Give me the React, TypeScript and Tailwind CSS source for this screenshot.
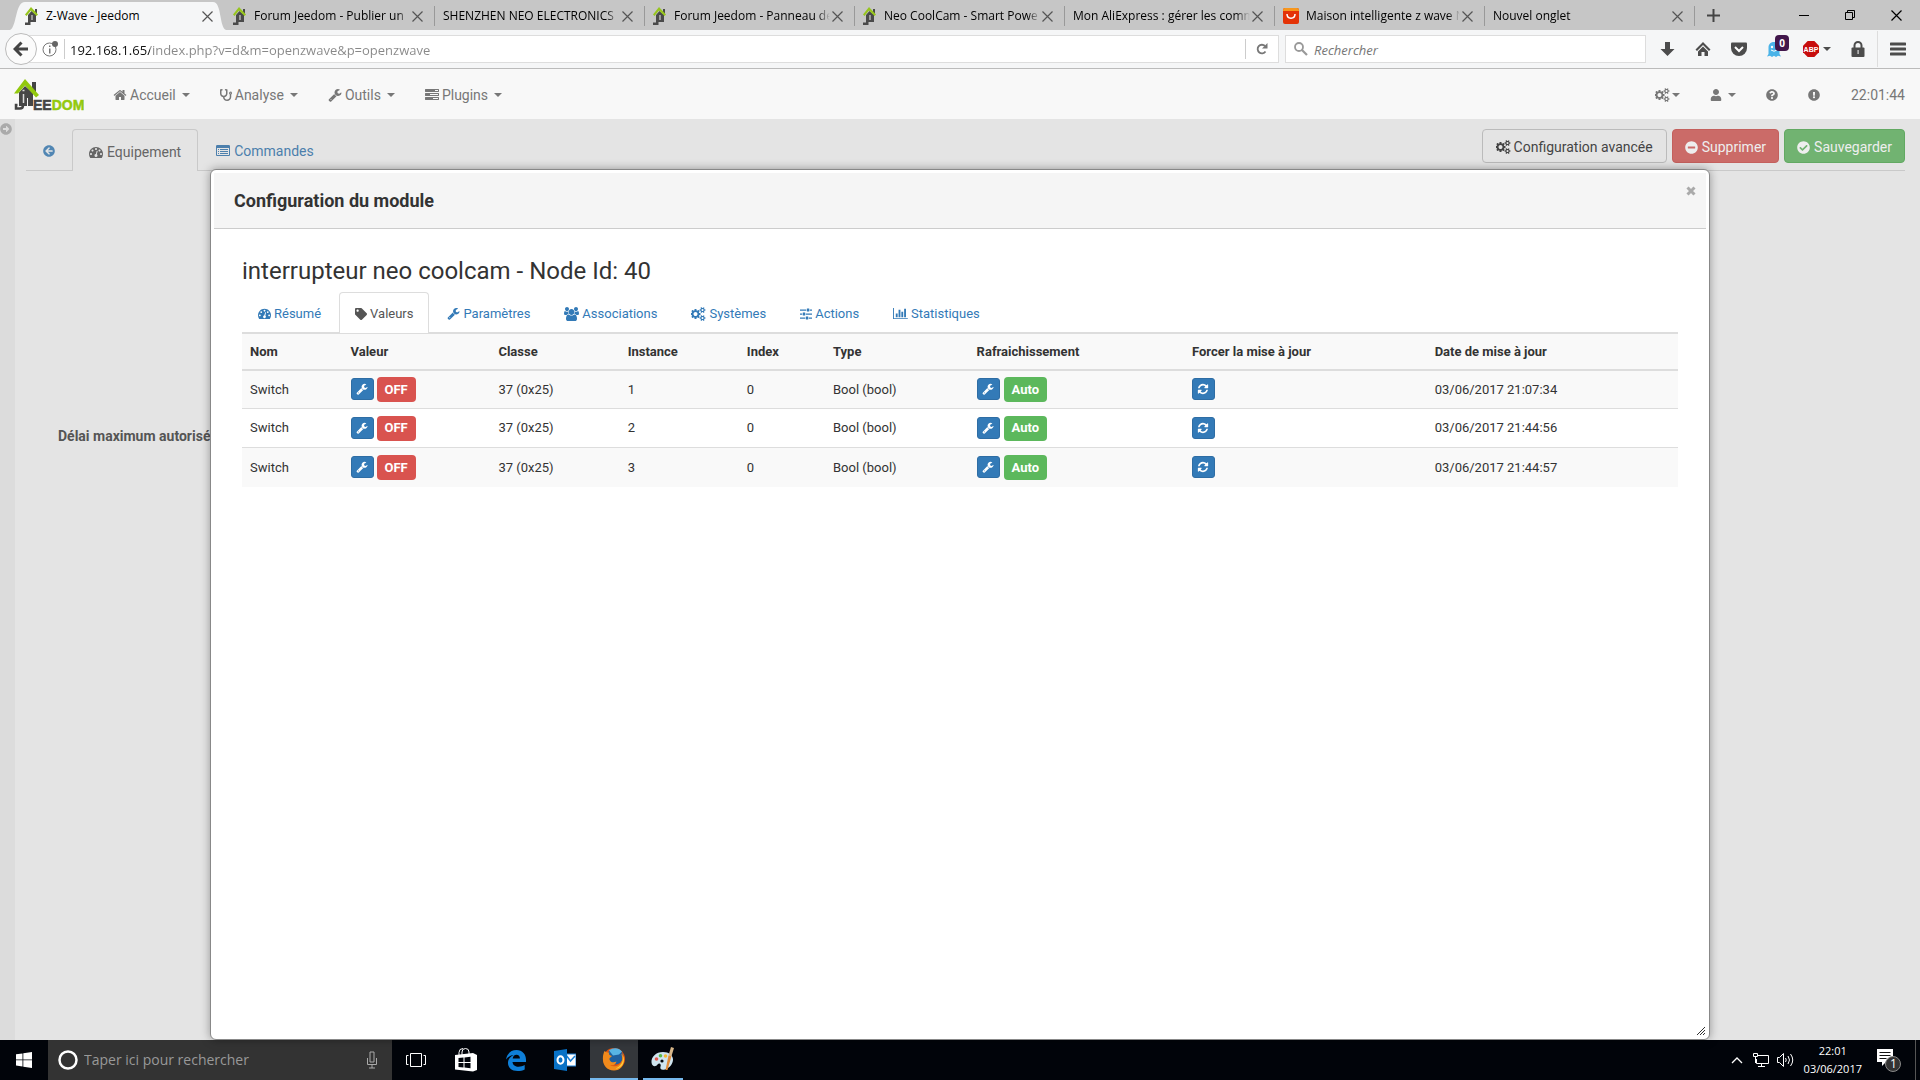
import React from 'react';
import {
    FaArrowAltCircleRight,
    FaArrowCircleLeft,
    FaCheckCircle,
    FaExclamationCircle,
    FaMinusCircle,
    FaQuestionCircle,
    FaStethoscope,
    FaTag,
    FaUser,
} from 'react-icons/fa';

const GLYPHS = {
    wrench: {
        width: 1792,
        d: 'M448 1472q0-26-19-45t-45-19-45 19-19 45 19 45 45 19 45-19 19-45zm644-420l-682 682q-37 37-90 37-52 0-91-37l-106-108q-38-36-38-90 0-53 38-91l681-681q39 98 114.5 173.5t173.5 114.5zm634-435q0 39-23 106-47 134-164.5 217.5t-258.5 83.5q-185 0-316.5-131.5t-131.5-316.5 131.5-316.5 316.5-131.5q58 0 121.5 16.5t107.5 46.5q16 11 16 28t-16 28l-293 169v224l193 107q5-3 79-48.5t135.5-81 70.5-35.5q15 0 23.5 10t8.5 25z',
    },
    refresh: {
        width: 1792,
        d: 'M1639 1056q0 5-1 7-64 268-268 434.5t-478 166.5q-146 0-282.5-55t-243.5-157l-129 129q-19 19-45 19t-45-19-19-45v-448q0-26 19-45t45-19h448q26 0 45 19t19 45-19 45l-137 137q71 66 161 102t187 36q134 0 250-65t186-179q11-17 53-117 8-23 30-23h192q13 0 22.5 9.5t9.5 22.5zm25-800v448q0 26-19 45t-45 19h-448q-26 0-45-19t-19-45 19-45l138-138q-148-137-349-137-134 0-250 65t-186 179q-11 17-53 117-8 23-30 23h-199q-13 0-22.5-9.5t-9.5-22.5v-7q65-268 270-434.5t480-166.5q146 0 284 55.5t245 156.5l130-129q19-19 45-19t45 19 19 45z',
    },
    home: {
        width: 1792,
        d: 'M1472 992v480q0 26-19 45t-45 19h-384v-384h-256v384h-384q-26 0-45-19t-19-45v-480q0-1 .5-3t.5-3l575-474 575 474q1 2 1 6zm223-69l-62 74q-8 9-21 11h-3q-13 0-21-7l-692-577-692 577q-12 8-24 7-13-2-21-11l-62-74q-8-10-7-23.5t11-21.5l719-599q32-26 76-26t76 26l244 204v-195q0-14 9-23t23-9h192q14 0 23 9t9 23v408l219 182q10 8 11 21.5t-7 23.5z',
    },
    cogs: {
        width: 1920,
        d: 'M832 896q0-106-75-181t-181-75-181 75-75 181 75 181 181 75 181-75 75-181zm768 512q0-52-38-90t-90-38-90 38-38 90q0 53 37.5 90.5t90.5 37.5 90.5-37.5 37.5-90.5zm0-1024q0-52-38-90t-90-38-90 38-38 90q0 53 37.5 90.5t90.5 37.5 90.5-37.5 37.5-90.5zm-384 421v185q0 10-7 19.5t-16 10.5l-155 24q-11 35-32 76 34 48 90 115 7 11 7 20 0 12-7 19-23 30-82.5 89.5t-78.5 59.5q-11 0-21-7l-115-90q-37 19-77 31-11 108-23 155-7 24-30 24h-186q-11 0-20-7.5t-10-17.5l-23-153q-34-10-75-31l-118 89q-7 7-20 7-11 0-21-8-144-133-144-160 0-9 7-19 10-14 41-53t47-61q-23-44-35-82l-152-24q-10-1-17-9.5t-7-19.5v-185q0-10 7-19.5t16-10.5l155-24q11-35 32-76-34-48-90-115-7-11-7-20 0-12 7-20 22-30 82-89t79-59q11 0 21 7l115 90q34-18 77-32 11-108 23-154 7-24 30-24h186q11 0 20 7.5t10 17.5l23 153q34 10 75 31l118-89q8-7 20-7 11 0 21 8 144 133 144 160 0 8-7 19-12 16-42 54t-45 60q23 48 34 82l152 23q10 2 17 10.5t7 19.5zm640 533v140q0 16-149 31-12 27-30 52 51 113 51 138 0 4-4 7-122 71-124 71-8 0-46-47t-52-68q-20 2-30 2t-30-2q-14 21-52 68t-46 47q-2 0-124-71-4-3-4-7 0-25 51-138-18-25-30-52-149-15-149-31v-140q0-16 149-31 13-29 30-52-51-113-51-138 0-4 4-7 4-2 35-20t59-34 30-16q8 0 46 46.5t52 67.5q20-2 30-2t30 2q51-71 92-112l6-2q4 0 124 70 4 3 4 7 0 25-51 138 17 23 30 52 149 15 149 31zm0-1024v140q0 16-149 31-12 27-30 52 51 113 51 138 0 4-4 7-122 71-124 71-8 0-46-47t-52-68q-20 2-30 2t-30-2q-14 21-52 68t-46 47q-2 0-124-71-4-3-4-7 0-25 51-138-18-25-30-52-149-15-149-31v-140q0-16 149-31 13-29 30-52-51-113-51-138 0-4 4-7 4-2 35-20t59-34 30-16q8 0 46 46.5t52 67.5q20-2 30-2t30 2q51-71 92-112l6-2q4 0 124 70 4 3 4 7 0 25-51 138 17 23 30 52 149 15 149 31z',
    },
    dashboard: {
        width: 1792,
        d: 'M384 1152q0-53-37.5-90.5t-90.5-37.5-90.5 37.5-37.5 90.5 37.5 90.5 90.5 37.5 90.5-37.5 37.5-90.5zm192-448q0-53-37.5-90.5t-90.5-37.5-90.5 37.5-37.5 90.5 37.5 90.5 90.5 37.5 90.5-37.5 37.5-90.5zm428 481l101-382q6-26-7.5-48.5t-38.5-29.5-48 6.5-30 39.5l-101 382q-60 5-107 43.5t-63 98.5q-20 77 20 146t117 89 146-20 89-117q16-60-6-117t-72-91zm660-33q0-53-37.5-90.5t-90.5-37.5-90.5 37.5-37.5 90.5 37.5 90.5 90.5 37.5 90.5-37.5 37.5-90.5zm-640-640q0-53-37.5-90.5t-90.5-37.5-90.5 37.5-37.5 90.5 37.5 90.5 90.5 37.5 90.5-37.5 37.5-90.5zm448 192q0-53-37.5-90.5t-90.5-37.5-90.5 37.5-37.5 90.5 37.5 90.5 90.5 37.5 90.5-37.5 37.5-90.5zm320 448q0 261-141 483-19 29-54 29h-1402q-35 0-54-29-141-221-141-483 0-182 71-348t191-286 286-191 348-71 348 71 286 191 191 286 71 348z',
    },
    users: {
        width: 1920,
        d: 'M593 896q-162 5-265 128h-134q-82 0-138-40.5t-56-118.5q0-353 124-353 6 0 43.5 21t97.5 42.5 119 21.5q67 0 133-23-5 37-5 66 0 139 81 256zm1071 637q0 120-73 189.5t-194 69.5h-874q-121 0-194-69.5t-73-189.5q0-53 3.5-103.5t14-109 26.5-108.5 43-97.5 62-81 85.5-53.5 111.5-20q10 0 43 21.5t73 48 107 48 135 21.5 135-21.5 107-48 73-48 43-21.5q61 0 111.5 20t85.5 53.5 62 81 43 97.5 26.5 108.5 14 109 3.5 103.5zm-1024-1277q0 106-75 181t-181 75-181-75-75-181 75-181 181-75 181 75 75 181zm704 384q0 159-112.5 271.5t-271.5 112.5-271.5-112.5-112.5-271.5 112.5-271.5 271.5-112.5 271.5 112.5 112.5 271.5zm576 225q0 78-56 118.5t-138 40.5h-134q-103-123-265-128 81-117 81-256 0-29-5-66 66 23 133 23 59 0 119-21.5t97.5-42.5 43.5-21q124 0 124 353zm-128-609q0 106-75 181t-181 75-181-75-75-181 75-181 181-75 181 75 75 181z',
    },
    chart: {
        width: 2048,
        d: 'M640 896v512h-256v-512h256zm384-512v1024h-256v-1024h256zm1024 1152v128h-2048v-1536h128v1408h1920zm-640-896v768h-256v-768h256zm384-384v1152h-256v-1152h256z',
    },
    sliders: {
        width: 1536,
        d: 'M0 320h800v150h-800zM1248 320h288v150h-288zM880 200h300v390h-300zM0 832h288v150h-288zM736 832h800v150h-800zM360 712h300v390h-300zM0 1344h672v150h-672zM1120 1344h416v150h-416zM750 1224h300v390h-300z',
    },
    tasks: {
        width: 1792,
        d: 'M1024 1408h640v-128h-640v128zm-384-512h1024v-128h-1024v128zm640-512h384v-128h-384v128zm512 832v256q0 26-19 45t-45 19h-1664q-26 0-45-19t-19-45v-256q0-26 19-45t45-19h1664q26 0 45 19t19 45zm0-512v256q0 26-19 45t-45 19h-1664q-26 0-45-19t-19-45v-256q0-26 19-45t45-19h1664q26 0 45 19t19 45zm0-512v256q0 26-19 45t-45 19h-1664q-26 0-45-19t-19-45v-256q0-26 19-45t45-19h1664q26 0 45 19t19 45z',
    },
    list: {
        width: 1792,
        d: 'M384 1184v64q0 13-9.5 22.5t-22.5 9.5h-64q-13 0-22.5-9.5t-9.5-22.5v-64q0-13 9.5-22.5t22.5-9.5h64q13 0 22.5 9.5t9.5 22.5zm0-256v64q0 13-9.5 22.5t-22.5 9.5h-64q-13 0-22.5-9.5t-9.5-22.5v-64q0-13 9.5-22.5t22.5-9.5h64q13 0 22.5 9.5t9.5 22.5zm0-256v64q0 13-9.5 22.5t-22.5 9.5h-64q-13 0-22.5-9.5t-9.5-22.5v-64q0-13 9.5-22.5t22.5-9.5h64q13 0 22.5 9.5t9.5 22.5zm1152 512v64q0 13-9.5 22.5t-22.5 9.5h-960q-13 0-22.5-9.5t-9.5-22.5v-64q0-13 9.5-22.5t22.5-9.5h960q13 0 22.5 9.5t9.5 22.5zm0-256v64q0 13-9.5 22.5t-22.5 9.5h-960q-13 0-22.5-9.5t-9.5-22.5v-64q0-13 9.5-22.5t22.5-9.5h960q13 0 22.5 9.5t9.5 22.5zm0-256v64q0 13-9.5 22.5t-22.5 9.5h-960q-13 0-22.5-9.5t-9.5-22.5v-64q0-13 9.5-22.5t22.5-9.5h960q13 0 22.5 9.5t9.5 22.5zm128 704v-832q0-13-9.5-22.5t-22.5-9.5h-1472q-13 0-22.5 9.5t-9.5 22.5v832q0 13 9.5 22.5t22.5 9.5h1472q13 0 22.5-9.5t9.5-22.5zm128-1088v1088q0 66-47 113t-113 47h-1472q-66 0-113-47t-47-113v-1088q0-66 47-113t113-47h1472q66 0 113 47t47 113z',
    },
};

const Glyph: React.FC<{ name: keyof typeof GLYPHS; className?: string }> = ({ name, className }) => (
    <svg viewBox={`0 0 ${GLYPHS[name].width} 1792`} fill="currentColor" aria-hidden="true" className={className ?? 'h-3.5 shrink-0'}>
        <path fillRule="evenodd" d={GLYPHS[name].d} />
    </svg>
);

const Caret: React.FC<{ className?: string }> = ({ className }) => (
    <svg viewBox="0 0 8 4" fill="currentColor" aria-hidden="true" className={`h-1 w-2 shrink-0 ${className ?? ''}`}>
        <path d="M0 0h8L4 4z" />
    </svg>
);

const JeedomMark = () => (
    <svg viewBox="0 0 14 18" className="h-[18px] w-3.5 shrink-0" aria-hidden="true">
        <path d="M10 2h2v6h-2z" fill="#4a4a4a" />
        <path d="M3 8l3.500-4L11 8v7H5.500v3H0v-2.500h3z" fill="#4a4a4a" />
        <path d="M6 8h2v5H6z" fill="#9a9a9a" />
        <path d="M6 0l7 7.500-1.500 1.500L6 3.500 1.500 9 0 7.500z" fill="#97c51e" />
    </svg>
);

const AliMark = () => (
    <svg viewBox="0 0 16 16" className="size-4 shrink-0" aria-hidden="true">
        <rect width="16" height="16" rx="2" fill="#e43307" />
        <path d="M2 0h12a2 2 0 0 1 2 2v1H0V2a2 2 0 0 1 2-2z" fill="#f7971d" />
        <path d="M4 6c0 5.500 8 5.500 8 0" fill="none" stroke="#fff" strokeWidth="1.500" />
    </svg>
);

const Cross: React.FC<{ className?: string }> = ({ className }) => (
    <svg viewBox="0 0 11 11" className={className ?? 'size-[11px]'} aria-hidden="true">
        <path d="M.5.5l10 10M10.500.5l-10 10" stroke="currentColor" strokeWidth="1.200" />
    </svg>
);

interface BrowserTabProps {
    title: string;
    icon?: React.ReactNode;
}

const BROWSER_TABS: BrowserTabProps[] = [
    { title: 'Forum Jeedom - Publier un', icon: <JeedomMark /> },
    { title: 'SHENZHEN NEO ELECTRONICS' },
    { title: 'Forum Jeedom - Panneau de', icon: <JeedomMark /> },
    { title: 'Neo CoolCam - Smart Powe', icon: <JeedomMark /> },
    { title: 'Mon AliExpress : gérer les comm' },
    { title: 'Maison intelligente z wave N', icon: <AliMark /> },
    { title: 'Nouvel onglet' },
];

const BrowserTab: React.FC<BrowserTabProps> = ({ title, icon }) => (
    <div className="relative flex h-full w-[210px] min-w-0 items-center pl-2 pr-3 pt-0.5">
        <button className="flex h-full min-w-0 flex-1 items-center gap-[7px] overflow-hidden">
            {icon}
            <span className="min-w-0 flex-1 overflow-hidden whitespace-nowrap text-left [mask-image:linear-gradient(to_right,black_92%,transparent)]">{title}</span>
        </button>
        <button aria-label="Fermer l'onglet" className="ml-0.5 text-[#555]"><Cross /></button>
        <span className="absolute right-0 top-1.5 h-5 w-px bg-[#999]" />
    </div>
);

const BrowserChrome = () => (
    <header className="shrink-0 font-['Open_Sans',sans-serif] text-black">
        <div className="flex h-[30px] items-center bg-[#c6c6c6] text-xs">
            <div className="relative z-0 flex h-full w-[225px] shrink-0 items-center pl-[25px] pr-3 pt-0.5">
                <svg viewBox="0 0 216 28" preserveAspectRatio="none" className="absolute bottom-0 left-2.5 -z-10 h-7 w-[216px]" aria-hidden="true">
                    <path d="M0 28c7-3 5-28 15-28h188c9 0 6 25 13 28z" fill="#f5f6f7" />
                </svg>
                <button className="flex h-full flex-1 items-center gap-[7px]">
                    <JeedomMark />
                    Z-Wave - Jeedom
                </button>
                <button aria-label="Fermer l'onglet" className="text-[#555]"><Cross /></button>
            </div>
            {BROWSER_TABS.map((tab) => <BrowserTab key={tab.title} {...tab} />)}
            <button aria-label="Nouvel onglet" className="ml-3 text-[#444]">
                <svg viewBox="0 0 13 13" className="size-[13px]"><path d="M6.500 0v13M0 6.500h13" stroke="currentColor" strokeWidth="2" /></svg>
            </button>
            <div className="ml-auto flex items-center gap-9 pr-[18px]">
                <button aria-label="Réduire"><svg viewBox="0 0 10 10" className="size-2.5"><path d="M0 5.500h10" stroke="#000" /></svg></button>
                <button aria-label="Restaurer"><svg viewBox="0 0 10 10" className="size-2.5"><path d="M.5 2.500h7v7h-7zM2.500 2.500v-2h7v7h-2" fill="none" stroke="#000" /></svg></button>
                <button aria-label="Fermer"><Cross /></button>
            </div>
        </div>
        <div className="flex h-[39px] items-center border-b border-[#bbb] bg-[#f5f6f7] pl-[5px] pr-3.5 text-[#4c4c4c]">
            <button aria-label="Page précédente" className="z-10 flex size-8 shrink-0 items-center justify-center rounded-full border border-[#bbb] bg-[#fbfbfb]">
                <svg viewBox="0 0 16 16" className="size-4"><path d="M8.500 1.500L2 8l6.500 6.500M2.500 8H15" fill="none" stroke="#444" strokeWidth="3" /></svg>
            </button>
            <div className="-ml-4 flex h-7 flex-1 items-center border border-[#ddd] bg-white pl-5">
                <svg viewBox="0 0 16 16" className="size-4 shrink-0" aria-hidden="true">
                    <circle cx="7.500" cy="8.500" r="6.500" fill="none" stroke="#777" />
                    <path d="M7 7.500h1.500v5H7zM7 4.500h1.500V6H7z" fill="#777" />
                    <circle cx="13" cy="3" r="3" fill="#666" />
                </svg>
                <span className="ml-1.5 mr-[5px] h-5 w-px bg-[#ccc]" />
                <input
                    aria-label="Adresse"
                    defaultValue="192.168.1.65/index.php?v=d&m=openzwave&p=openzwave"
                    className="h-full min-w-0 flex-1 bg-[linear-gradient(to_right,#111_80px,#888_80px)] bg-clip-text pt-0.5 text-[13px] text-transparent outline-none"
                />
                <span className="h-5 w-px bg-[#ccc]" />
                <button aria-label="Actualiser" className="flex w-8 justify-center">
                    <svg viewBox="0 0 12 12" className="size-3"><path d="M9.500 8.500A4.300 4.300 0 1 1 9 3" fill="none" stroke="#777" strokeWidth="1.800" /><path d="M11.500 0v5.500H6z" fill="#777" /></svg>
                </button>
            </div>
            <label className="ml-1.5 flex h-7 w-[361px] shrink items-center gap-1.5 border border-[#ddd] bg-white px-2">
                <svg viewBox="0 0 14 14" className="size-3.5 shrink-0"><circle cx="5" cy="5" r="4" fill="none" stroke="#999" strokeWidth="1.800" /><path d="M8 8l5 5" stroke="#999" strokeWidth="2.200" /></svg>
                <input aria-label="Rechercher" placeholder="Rechercher" className="h-full min-w-0 flex-1 pt-0.5 text-[13px] italic outline-none placeholder:text-[#777]" />
            </label>
            <div className="ml-3.5 flex items-center">
                <button aria-label="Téléchargements" className="mr-5"><svg viewBox="0 0 15 16" className="h-4 w-[15px]"><path d="M5 1h5v7h4.500L7.500 15 .5 8H5z" fill="currentColor" /></svg></button>
                <button aria-label="Accueil" className="mr-5"><svg viewBox="0 0 16 16" className="size-4"><path d="M8 1l7.500 7.500-1.500 1.400-6-6-6 6L.5 8.500zM8 5.500l5 5V15H9.500v-4h-3v4H3v-4.500z" fill="currentColor" /></svg></button>
                <button aria-label="Pocket" className="mr-5"><svg viewBox="0 0 16 16" className="size-4"><path d="M1 1.500h14q1 0 1 1V7a8 8 0 0 1-16 0V2.500q0-1 1-1z" fill="currentColor" /><path d="M4 6l4 4 4-4" fill="none" stroke="#fff" strokeWidth="2" /></svg></button>
                <button aria-label="Ghostery" className="relative mr-5 w-4">
                    <svg viewBox="0 0 14 16" className="h-4 w-3.5"><path d="M1.500 6.500C1.500-.8 12.500-.8 12.500 6.500V13l1.500 2.500-3-.8L9 16l-2-1.300L5 16l-2-1.300-3 .8L1.500 13z" fill="#4ab3e8" /><circle cx="5" cy="6" r="1.200" fill="#fff" /><circle cx="9" cy="6" r="1.200" fill="#fff" /><path d="M4 9q3 2.500 6 0" fill="none" stroke="#fff" /></svg>
                    <span className="absolute -top-1.5 left-2 flex h-4 w-3.5 items-center justify-center rounded-sm bg-[#41164b] text-[10px] font-bold text-white">0</span>
                </button>
                <button aria-label="Adblock Plus" className="mr-5 flex items-center gap-1">
                    <svg viewBox="0 0 16 16" className="size-4"><path d="M4.700 0h6.600L16 4.700v6.600L11.300 16H4.700L0 11.300V4.700z" fill="#c70d0d" /><text x="8" y="10.800" textAnchor="middle" fontSize="7" fontWeight="700" fill="#fff" fontFamily="Liberation Sans">ABP</text></svg>
                    <Caret />
                </button>
                <button aria-label="Verrou" className="mr-3"><svg viewBox="0 0 14 16" className="h-4 w-3.5"><path d="M3.500 8V4.500a3.500 3.500 0 0 1 7 0V8" fill="none" stroke="currentColor" strokeWidth="2" /><rect x=".5" y="6.500" width="13" height="9.500" rx="1" fill="currentColor" /><path d="M6.500 9h1.200v4H6.500z" fill="#ddd" /></svg></button>
                <button aria-label="Menu" className="flex h-9 items-center border-l border-[#ddd] pl-3"><svg viewBox="0 0 16 14" className="h-3.5 w-4"><path d="M1 2h14M1 7h14M1 12h14" stroke="currentColor" strokeWidth="3" strokeLinecap="round" /></svg></button>
            </div>
        </div>
    </header>
);

const NavItem: React.FC<{ icon: React.ReactNode; label: string }> = ({ icon, label }) => (
    <a href="#" className="flex h-full items-center gap-[3px] px-[15px]">
        {icon}
        {label}
        <Caret className="ml-[3px]" />
    </a>
);

const JeedomNav = () => (
    <nav className="flex h-[50px] shrink-0 items-center bg-[#f8f8f8] pl-3.5 pt-0.5 text-sm text-[#777]">
        <a href="#" aria-label="Jeedom" className="mr-3.5">
            <svg viewBox="0 0 70 32" className="h-8 w-[70px]">
                <path d="M18 3h4v11h-4z" fill="#444" />
                <path d="M5 13.500L11 7l8 7v13h-5v-8h-1v8H5z" fill="#474747" />
                <path d="M9 15v11.500q0 3-3 3H2V26h1.500" fill="none" stroke="#444" strokeWidth="2.500" />
                <path d="M9.500 15v9M8.500 11.500h2" stroke="#ddd" strokeWidth="1.500" />
                <path d="M11 0l14 16-3 2.500L11 6.500 4 14.500H0z" fill="#93c90e" />
                <text x="19" y="30.500" fontSize="14" fontWeight="900" fontFamily="Liberation Sans" fill="#444" stroke="#444" strokeWidth=".5">EE<tspan fill="#93c90e" stroke="#93c90e">DOM</tspan></text>
            </svg>
        </a>
        <NavItem icon={<Glyph name="home" />} label="Accueil" />
        <NavItem icon={<FaStethoscope className="size-3" />} label="Analyse" />
        <NavItem icon={<Glyph name="wrench" />} label="Outils" />
        <NavItem icon={<Glyph name="tasks" />} label="Plugins" />
        <div className="ml-auto flex h-full items-center pr-[15px]">
            <a href="#" aria-label="Configuration" className="flex items-center px-[15px]"><Glyph name="cogs" /><Caret className="ml-0.5" /></a>
            <a href="#" aria-label="Utilisateur" className="flex items-center gap-1.5 px-[15px]"><FaUser className="size-3" /><Caret /></a>
            <a href="#" aria-label="Aide" className="px-[15px]"><FaQuestionCircle className="size-3" /></a>
            <a href="#" aria-label="Informations" className="px-[15px]"><FaExclamationCircle className="size-3" /></a>
            <span className="pl-4">22:01:44</span>
        </div>
    </nav>
);

const EquipmentToolbar = () => (
    <div className="flex items-start justify-between border-b border-[#c9c9c9]">
        <div className="-mb-px flex h-[42px] text-sm">
            <a href="#" aria-label="Retour" className="flex items-center px-[17px] pt-0.5 text-[#5186b3]"><FaArrowCircleLeft className="size-3" /></a>
            <a href="#" className="flex items-center gap-1 rounded-t border border-b-0 border-[#c9c9c9] bg-[#e4e4e4] px-4 pt-0.5 text-[#666]"><Glyph name="dashboard" />Equipement</a>
            <a href="#" className="flex items-center gap-1 px-[18px] pt-0.5 text-[#4c7fac]"><Glyph name="list" />Commandes</a>
        </div>
        <div className="flex gap-[5px] text-sm">
            <button className="flex h-[34px] items-center gap-[3px] rounded border border-[#bbb] px-[13px] pt-0.5 text-[#444]"><Glyph name="cogs" />Configuration avancée</button>
            <button className="flex h-[34px] items-center gap-1 rounded border border-[#c4605d] bg-[#cb6b68] px-3 pt-0.5 text-[#eee]"><FaMinusCircle className="size-[13px]" />Supprimer</button>
            <button className="flex h-[34px] items-center gap-1 rounded border border-[#62a962] bg-[#71b371] px-3 pt-0.5 text-[#eee]"><FaCheckCircle className="size-[13px]" />Sauvegarder</button>
        </div>
    </div>
);

const MODULE_TABS: { label: string; icon: React.ReactNode; active?: boolean }[] = [
    { label: 'Résumé', icon: <Glyph name="dashboard" className="h-[13px] shrink-0" /> },
    { label: 'Valeurs', icon: <FaTag className="size-3" />, active: true },
    { label: 'Paramètres', icon: <Glyph name="wrench" className="h-[13px] shrink-0" /> },
    { label: 'Associations', icon: <Glyph name="users" /> },
    { label: 'Systèmes', icon: <Glyph name="cogs" /> },
    { label: 'Actions', icon: <Glyph name="sliders" /> },
    { label: 'Statistiques', icon: <Glyph name="chart" className="h-[13px] shrink-0" /> },
];

const VALUES = [
    { name: 'Switch', commandClass: '37 (0x25)', instance: 1, index: 0, type: 'Bool (bool)', updated: '03/06/2017 21:07:34' },
    { name: 'Switch', commandClass: '37 (0x25)', instance: 2, index: 0, type: 'Bool (bool)', updated: '03/06/2017 21:44:56' },
    { name: 'Switch', commandClass: '37 (0x25)', instance: 3, index: 0, type: 'Bool (bool)', updated: '03/06/2017 21:44:57' },
];

const IconButton: React.FC<{ icon: keyof typeof GLYPHS; label: string }> = ({ icon, label }) => (
    <button aria-label={label} className="flex h-[22px] w-[23px] items-center justify-center rounded-[3px] border border-[#2e6da4] bg-[#337ab7] text-white">
        <Glyph name={icon} className="size-3" />
    </button>
);

const ValuesTable = () => (
    <table className="w-full table-fixed border-collapse text-left text-[13px]">
        <thead className="bg-[#f9f9f9]">
            <tr className="h-9 border-b-2 border-t border-[#ddd]">
                <th className="w-[7%] px-2">Nom</th>
                <th className="w-[10.3%] px-2">Valeur</th>
                <th className="w-[9%] px-2">Classe</th>
                <th className="w-[8.3%] px-2">Instance</th>
                <th className="w-[6%] px-2">Index</th>
                <th className="w-[10%] px-2">Type</th>
                <th className="w-[15%] px-2">Rafraichissement</th>
                <th className="w-[16.9%] px-2">Forcer la mise à jour</th>
                <th className="px-2">Date de mise à jour</th>
            </tr>
        </thead>
        <tbody>
            {VALUES.map((value) => (
                <tr key={value.instance} className="h-[39px] border-t border-[#ddd] odd:bg-[#f9f9f9]">
                    <td className="px-2">{value.name}</td>
                    <td className="px-2">
                        <div className="flex items-center gap-[3px]">
                            <IconButton icon="wrench" label="Modifier la valeur" />
                            <span className="flex h-[25px] items-center rounded bg-[#d9534f] px-2 font-bold text-white">OFF</span>
                        </div>
                    </td>
                    <td className="px-2">{value.commandClass}</td>
                    <td className="px-2">{value.instance}</td>
                    <td className="px-2">{value.index}</td>
                    <td className="px-2">{value.type}</td>
                    <td className="px-2">
                        <div className="flex items-center gap-1">
                            <IconButton icon="wrench" label="Modifier le rafraichissement" />
                            <span className="flex h-[25px] items-center rounded bg-[#5cb85c] px-2 font-bold text-white">Auto</span>
                        </div>
                    </td>
                    <td className="px-2"><IconButton icon="refresh" label="Forcer la mise à jour" /></td>
                    <td className="px-2">{value.updated}</td>
                </tr>
            ))}
        </tbody>
    </table>
);

const ModuleDialog = () => (
    <section role="dialog" aria-labelledby="module-title" className="absolute inset-x-[210px] bottom-0 top-[50px] rounded-md border border-[#888] bg-white p-[3px] text-[#333] shadow-[0_0_10px_rgba(0,0,0,0.35)]">
        <div className="flex h-14 items-center justify-between border-b border-[#ccc] bg-[#f5f5f5] pl-5 pr-2.5">
            <h1 id="module-title" className="text-lg font-bold">Configuration du module</h1>
            <button aria-label="Fermer" className="mb-5 text-[#aaa]">
                <svg viewBox="0 0 10 10" className="size-2.5"><path d="M1.500 1.500l7 7M8.500 1.500l-7 7" stroke="currentColor" strokeWidth="3" /></svg>
            </button>
        </div>
        <div className="px-7 pt-[26px]">
            <h2 className="mb-[5px] text-2xl">interrupteur neo coolcam - Node Id: 40</h2>
            <div className="flex h-[41px] gap-0.5 border-b border-[#ddd] text-[13px]">
                {MODULE_TABS.map((tab) => (
                    <a
                        key={tab.label}
                        href="#"
                        className={tab.active
                            ? '-mb-px flex items-center gap-[3px] rounded-t border border-b-0 border-[#ddd] bg-white px-[15px] pt-0.5 text-[#555]'
                            : 'flex items-center gap-[3px] px-4 pt-[3px] text-[#337ab7]'}
                    >
                        {tab.icon}
                        {tab.label}
                    </a>
                ))}
            </div>
            <ValuesTable />
        </div>
        <svg viewBox="0 0 8 8" className="absolute bottom-1 right-1 size-2" aria-hidden="true">
            <path d="M0 8L8 0M3 8l5-5M6 8l2-2" stroke="#333" />
        </svg>
    </section>
);

const Taskbar = () => (
    <footer className="flex h-10 shrink-0 items-center bg-[#01040a] font-['Open_Sans',sans-serif] text-white">
        <button aria-label="Démarrer" className="flex w-12 justify-center">
            <svg viewBox="0 0 16 16" className="size-4"><path d="M0 2.300L6.500 1.400v6.100H0zM7.300 1.300L16 0v7.500H7.300zM0 8.300h6.500v6.200L0 13.600zM7.300 8.300H16V16l-8.700-1.200z" fill="#fff" /></svg>
        </button>
        <label className="flex h-full w-[344px] items-center gap-1.5 bg-[#333] px-2.5">
            <svg viewBox="0 0 20 20" className="size-5 shrink-0"><circle cx="10" cy="10" r="8.500" fill="none" stroke="#fff" strokeWidth="2.500" /></svg>
            <input aria-label="Recherche Windows" placeholder="Taper ici pour rechercher" className="min-w-0 flex-1 text-sm outline-none placeholder:text-[#999]" />
            <svg viewBox="0 0 12 18" className="mr-1 h-[18px] w-3"><path d="M4 1h4v10H4zM1.500 7v6.500h9V7M6 13.500V17M3 17h6" fill="none" stroke="#aaa" /></svg>
        </label>
        <button aria-label="Vue des tâches" className="flex h-full w-12 items-center justify-center">
            <svg viewBox="0 0 20 16" className="h-4 w-5"><path d="M4.500 1.500h11v13h-11zM2.500 3.500h-2v9h2M17.500 3.500h2v9h-2" fill="none" stroke="#fff" /></svg>
        </button>
        <button aria-label="Store" className="flex h-full w-[52px] items-center justify-center">
            <svg viewBox="0 0 22 24" className="h-6 w-[22px]"><path d="M7 7V4a3.500 3.500 0 0 1 7 0v2M4 7V4.500a4 4 0 0 1 4-4" fill="none" stroke="#fff" /><path d="M0 7l18-2 4 2v15l-4 1.500L0 21.500z" fill="#fff" /><path d="M3.500 10l5-.5V14h-5zM9.500 9.400l6-.6V14h-6zM3.500 15h5v4.500l-5-.5zM9.500 15h6v5.200l-6-.6z" fill="#01040a" /></svg>
        </button>
        <button aria-label="Edge" className="flex h-full w-12 items-center justify-center">
            <svg viewBox="0 0 20 21" className="h-[21px] w-5"><path d="M0 9.500C1 3.500 5 0 10.500 0 16.500 0 20 4.500 20 9.500V12H6.500c.2 3.200 3 4.800 6 4.800 2.300 0 4.300-.6 6.200-1.700v4.400c-2 1-4.400 1.500-7 1.500C5.500 21 2 17.500 2 13c0-3.500 2-6.500 5.500-8C4.500 5.300 1.800 6.800 0 9.500zM6.700 8.500h7.200c0-2.300-1.200-3.800-3.500-3.800-2 0-3.400 1.500-3.700 3.800z" fill="#0e7fd8" /></svg>
        </button>
        <button aria-label="Outlook" className="flex h-full w-[50px] items-center justify-center">
            <svg viewBox="0 0 22 22" className="size-[22px]"><path d="M11 5h11v12H11z" fill="#fff" stroke="#1b7fd4" /><path d="M12 6l4.500 6L21 7" fill="none" stroke="#1b7fd4" strokeWidth="1.500" /><path d="M0 2l13-2v22L0 20z" fill="#0872c6" /><ellipse cx="6.500" cy="11" rx="3" ry="3.700" fill="none" stroke="#fff" strokeWidth="2" /></svg>
        </button>
        <button aria-label="Firefox" className="flex h-full w-12 items-center justify-center border-b-2 border-[#76b9ed] bg-[#34373b]">
            <svg viewBox="0 0 24 24" className="size-6">
                <circle cx="12" cy="12" r="11" fill="#e2540e" />
                <circle cx="13" cy="9.500" r="8" fill="#1f5f9f" />
                <path d="M7 3.500c4-3.500 10-3 13 1l-3 3-6 1z" fill="#58b4e4" />
                <path d="M2.500 4c1 1.500 3 1.500 5 1.500-1 1.500-.5 3 2.500 3.500-1 1.500-3 1.500-2.500 3.500 1 3 4 3.500 7 2-1 3.500-4 4.500-7 3.500 5 3 11 .5 12.500-4.500.5-2.500 0-5-1-7 6 6 2 17-7 17C2 23.500-1.500 13 2.500 4z" fill="#f08a1c" />
                <path d="M20 6.500c3 6.500-.5 13-6.500 15 6.500 0 11-7.500 6.500-15z" fill="#ffd23b" />
            </svg>
        </button>
        <button aria-label="Paint" className="ml-[5px] flex h-full w-10 items-center justify-center border-b-2 border-[#76b9ed]">
            <svg viewBox="0 0 24 24" className="size-6"><path d="M12 5C5 5 0 10 .5 15.500 1 20 5 20 6.500 17.500c2-2.500 4 0 3 2-.8 2.500 1 4 4.500 3 5-1.500 8-6 8-10S18 5 12 5z" fill="#cfe4ef" /><circle cx="5.500" cy="12" r="1.800" fill="#e2574c" /><circle cx="9.500" cy="8.800" r="1.800" fill="#58b947" /><circle cx="14.500" cy="9" r="1.800" fill="#f4b92f" /><circle cx="11" cy="14" r="1.600" fill="#01040a" /><path d="M20 0l3 1-2.500 8-3-.5z" fill="#d9b88a" /><path d="M17.500 8.500l3 .5-4 14h-2z" fill="#e08b3a" /></svg>
        </button>
        <div className="ml-auto flex h-full items-center">
            <button aria-label="Icônes cachées" className="mr-2.5"><svg viewBox="0 0 12 7" className="h-[7px] w-3"><path d="M1 6l5-5 5 5" fill="none" stroke="#fff" strokeWidth="1.300" /></svg></button>
            <svg viewBox="0 0 16 14" className="mr-2 h-3.5 w-4"><path d="M4.500 2.500h11v8h-12V6M8.500 10.500v3M5 13.500h7M.5.500h4v3h-4zM2.500 3.500V10" fill="none" stroke="#fff" /></svg>
            <svg viewBox="0 0 17 14" className="mr-2.5 h-3.5 w-[17px]"><path d="M.5 4.500h2l4-4v13l-4-4h-2zM8.500 5q1.500 2 0 4M11 3q3 4 0 8M13.500 1q4.500 6 0 12" fill="none" stroke="#fff" /></svg>
            <div className="mr-[15px] text-center text-[11px] leading-[18px]">22:01<br />03/06/2017</div>
            <button aria-label="Notifications" className="relative mr-3.5 h-6 w-6">
                <svg viewBox="0 0 24 24" className="size-6"><path d="M0 1h16v13H9l-4 4v-4H0z" fill="#fff" /><path d="M2.500 4.500h11M2.500 7.500h11M2.500 10.500h7" stroke="#111" /><circle cx="16" cy="16" r="7.500" fill="#333" stroke="#888" /></svg>
                <span className="absolute left-[13px] top-2 text-xs leading-4">1</span>
            </button>
            <span className="mr-1 h-full w-px bg-[#555]" />
        </div>
    </footer>
);

const App = () => (
    <div className="flex h-screen flex-col overflow-hidden font-['Roboto',sans-serif]">
        <BrowserChrome />
        <JeedomNav />
        <main className="relative flex min-h-0 flex-1 bg-[#e4e4e4]">
            <aside className="w-[15px] bg-[#dcdcdc] pt-1">
                <FaArrowAltCircleRight className="size-3 text-[#aaa]" />
            </aside>
            <div className="flex-1 pl-[11px] pr-[15px] pt-2.5">
                <EquipmentToolbar />
                <p className="ml-8 mt-[255px] text-sm font-bold text-[#555]">Délai maximum autorisé</p>
            </div>
            <ModuleDialog />
        </main>
        <Taskbar />
    </div>
);

export default App;
